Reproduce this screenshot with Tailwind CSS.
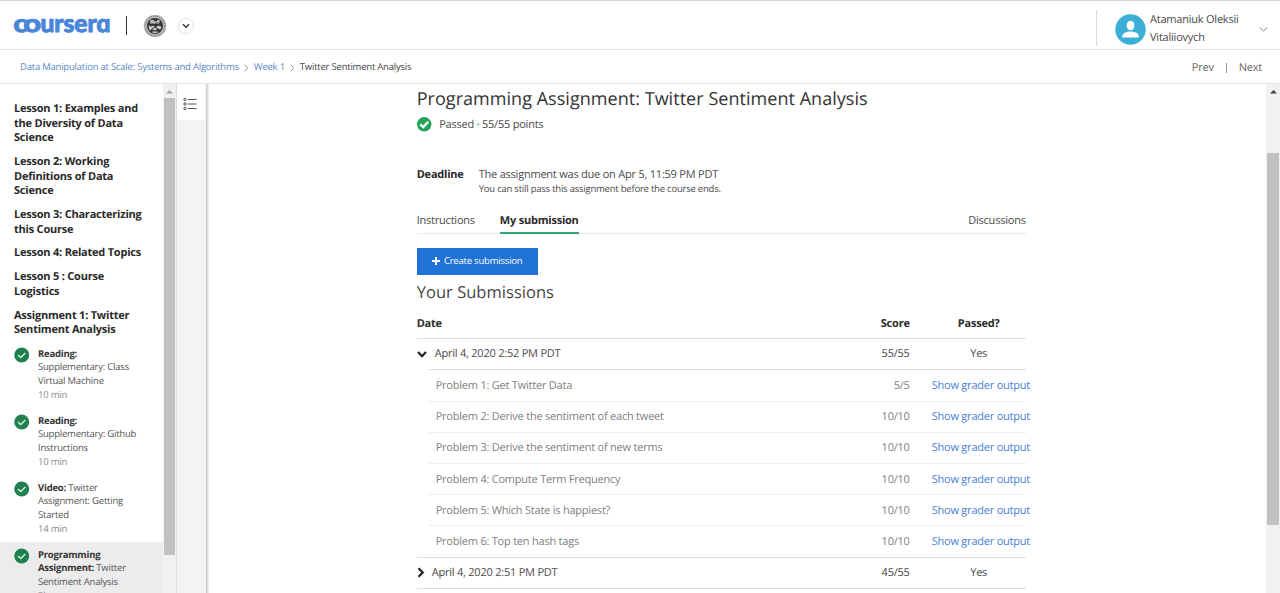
<!DOCTYPE html>
<html lang="en">
<head>
<meta charset="utf-8">
<title>Programming Assignment: Twitter Sentiment Analysis | Coursera</title>
<script src="https://cdn.jsdelivr.net/npm/@tailwindcss/browser@4"></script>
</head>
<body class="w-[1280px] h-[593px] overflow-hidden bg-white font-['Open_Sans',sans-serif] [text-rendering:geometricPrecision] text-[11px] tracking-[-0.22px] text-[#4a4a4a] flex flex-col">
<svg class="hidden">
  <symbol id="check" viewBox="0 0 16 16"><circle cx="7.700" cy="8" r="7.500" fill="#208050"/><path d="M4 8.1 6.800 10.6 11.300 6" fill="none" stroke="#cdf3dc" stroke-width="1.4"/></symbol>
</svg>
<header class="h-[50px] shrink-0 border-t border-b border-t-[#d5d5d5] border-b-[#e3e3e3] flex items-center">
  <svg class="ml-[13px] w-[98px] h-[36px] overflow-visible tracking-normal" viewBox="0 -3 98 36" role="img" aria-label="coursera"><g fill="#4a86d8" stroke="#4a86d8" stroke-width="1.200" font-family="Lato" font-weight="700" font-size="24.5"><text x="0.500" y="22" textLength="14" lengthAdjust="spacingAndGlyphs">c</text><text x="10.500" y="22" textLength="17.500" lengthAdjust="spacingAndGlyphs">o</text><text x="27.500" y="22" textLength="70" lengthAdjust="spacingAndGlyphs">urserɑ</text></g></svg>
  <div class="ml-[15px] w-px h-[19px] mt-px bg-[#333]"></div>
  <svg class="ml-4 w-[24px] h-[24px] mt-px" viewBox="0 0 24 24"><circle cx="12" cy="12" r="11.3" fill="#c0c0c0"/><circle cx="12" cy="12" r="9.800" fill="none" stroke="#808080" stroke-width="1.8" stroke-dasharray="1 1"/><circle cx="12" cy="12" r="8" fill="#333"/><path d="M7.500 6h3l1 1.500h2l1-1.500h2v3l-2 1H9l-2-1zM5.500 11.500l3 1 2-1 2 2 3-2 3 1-1 3-3-1-2 2-3-1-3 1zM9 17.500h6l-1 1.500h-4z" fill="#c8c8c8"/><path d="M9 8.500l2 2 4-2M8 16l4-3 4 3" stroke="#333" fill="none"/></svg>
  <div class="ml-[11px] mt-px size-[16px] rounded-full border border-[#e4e4e4] flex items-center justify-center"><svg class="w-[8px] h-[6px]" viewBox="0 0 8 6"><path d="M1 1.3 4 4.2 7 1.3" fill="none" stroke="#333" stroke-width="1.4"/></svg></div>
  <div class="ml-auto w-px h-[36px] mt-[6px] bg-[#d8d8d8]"></div>
  <svg class="ml-[18px] mt-[8px] w-[31px] h-[31px]" viewBox="0 0 31 31"><circle cx="15.500" cy="15.500" r="15.200" fill="#3bafd5"/><ellipse cx="15.500" cy="11.500" rx="3.900" ry="4.800" fill="#fff"/><path d="M7.300 23.500v-1.500c0-3 4.500-4.500 8.200-4.500s8.200 1.500 8.200 4.500v1.500z" fill="#fff"/></svg>
  <div class="ml-1 mt-[8px] w-[109px] leading-[18px]">Atamaniuk Oleksii<br>Vitaliiovych</div>
  <svg class="mt-[9px] mr-[12px] w-[9px] h-[7px]" viewBox="0 0 9 7"><path d="M.7 1.500 4.500 5 8.300 1.500" fill="none" stroke="#888"/></svg>
</header>
<nav class="h-[34px] pt-[2px] shrink-0 border-b border-[#e3e3e3] flex items-center pl-5 pr-[18px] text-[9.500px]">
  <span class="text-[#5a88c6]">Data Manipulation at Scale: Systems and Algorithms</span>
  <svg class="mx-[5px] mt-px w-[5px] h-[8px]" viewBox="0 0 5 8"><path d="M1 .7 3.500 4 1 7.300" fill="none" stroke="#999"/></svg>
  <span class="text-[#5a88c6]">Week 1</span>
  <svg class="mx-[5px] mt-px w-[5px] h-[8px]" viewBox="0 0 5 8"><path d="M1 .7 3.500 4 1 7.300" fill="none" stroke="#999"/></svg>
  <span class="text-[#444]">Twitter Sentiment Analysis</span>
  <span class="ml-auto mt-px flex items-center text-[11px] text-[#666]">Prev<i class="mx-[12px] w-px h-[10px] bg-[#999]"></i>Next</span>
</nav>
<div class="flex flex-1 min-h-0">
  <aside class="w-[163px] shrink-0 overflow-hidden pt-[17.800px]">
    <div class="pl-[14px] text-[11px] leading-[14.750px] font-bold text-[#2a2a2a] flex flex-col gap-[8.900px] whitespace-nowrap">
      <p>Lesson 1: Examples and<br>the Diversity of Data<br>Science</p>
      <p>Lesson 2: Working<br>Definitions of Data<br>Science</p>
      <p>Lesson 3: Characterizing<br>this Course</p>
      <p>Lesson 4: Related Topics</p>
      <p>Lesson 5 : Course<br>Logistics</p>
      <p>Assignment 1: Twitter<br>Sentiment Analysis</p>
    </div>
    <div class="mt-[2.900px] text-[9.500px] leading-[13.300px] text-[#555] whitespace-nowrap">
      <div class="h-[67px] pt-[6.200px] pl-[14px] flex gap-[8px]"><svg class="size-[16px]"><use href="#check"/></svg><div><b class="text-[#333]">Reading:</b><br>Supplementary: Class<br>Virtual Machine<p class="mt-[1.300px] text-[#888]">10 min</p></div></div>
      <div class="h-[67px] pt-[6.200px] pl-[14px] flex gap-[8px]"><svg class="size-[16px]"><use href="#check"/></svg><div><b class="text-[#333]">Reading:</b><br>Supplementary: Github<br>Instructions<p class="mt-[1.300px] text-[#888]">10 min</p></div></div>
      <div class="h-[67px] pt-[6.200px] pl-[14px] flex gap-[8px]"><svg class="size-[16px]"><use href="#check"/></svg><div><b class="text-[#333]">Video:</b> Twitter<br>Assignment: Getting<br>Started<p class="mt-[1.300px] text-[#888]">14 min</p></div></div>
      <div class="h-[67px] pt-[6.200px] pl-[14px] flex gap-[8px] bg-[#ececec]"><svg class="size-[16px]"><use href="#check"/></svg><div><b class="text-[#333]">Programming<br>Assignment:</b> Twitter<br>Sentiment Analysis<p class="mt-[1.300px] text-[#888]">3h</p></div></div>
    </div>
  </aside>
  <div class="w-[13px] shrink-0 bg-[#f1f1f1] flex flex-col items-center">
    <svg class="w-[7px] h-[14px] shrink-0" viewBox="0 0 7 14"><path d="M0 9.500 3.500 6 7 9.500z" fill="#a3a3a3"/></svg>
    <div class="w-[11px] h-[457px] bg-[#c1c1c1]"></div>
  </div>
  <div class="w-[30px] shrink-0 bg-[#f3f3f3] border-l border-[#ddd]">
    <div class="h-[36px] bg-white flex items-center justify-center mr-px"><svg class="w-[14px] h-[14px] mt-[4px] mr-[2px]" viewBox="0 0 14 14" fill="none" stroke="#444" stroke-width=".9"><circle cx="2" cy="2.500" r="1.200"/><circle cx="2" cy="7" r="1.200"/><circle cx="2" cy="11.500" r="1.200"/><path d="M5 2.500h8.500M5 7h8.500M5 11.500h8.500"/></svg></div>
  </div>
  <div class="w-[3px] shrink-0 bg-linear-to-r from-[#c6c6c6] to-[#f4f4f4]"></div>
  <main class="flex-1 min-w-0 overflow-hidden pl-[207.700px]">
    <div class="w-[609px] whitespace-nowrap">
      <h1 class="pt-[4px] h-[29px] text-[18px] leading-[23px] tracking-[0.04px] text-[#333]">Programming Assignment: Twitter Sentiment Analysis</h1>
      <div class="h-[22px] flex items-center gap-[7.500px]"><svg class="size-[15px]" viewBox="0 0 15 15"><circle cx="7.200" cy="7.300" r="7.200" fill="#25a35a"/><path d="M3.200 7.400 6.200 10.100 11.200 4.800" fill="none" stroke="#fff" stroke-width="2.300"/></svg><span class="pt-[2px]">Passed · 55/55 points</span></div>
      <div class="mt-[32px] flex leading-[15px]"><b class="w-[62px] text-[#2a2a2a]">Deadline</b><div>The assignment was due on Apr 5, 11:59 PM PDT<p class="text-[9.500px] leading-[14px]">You can still pass this assignment before the course ends.</p></div></div>
      <div class="mt-[11px] h-[27px] border-b border-[#eaeaea] flex leading-[28px]"><span>Instructions</span><b class="ml-[25px] h-[27px] border-b-2 border-[#2fa870] text-[#2a2a2a]">My submission</b><span class="ml-auto">Discussions</span></div>
      <button class="mt-[14px] w-[121px] h-[27px] bg-[#2172d7] text-white text-[9.600px] tracking-[-0.25px] flex items-center justify-center gap-1"><svg class="size-[8px] mb-px" viewBox="0 0 8 8"><path d="M4 0v8M0 4h8" stroke="#fff" stroke-width="2"/></svg>Create submission</button>
      <h2 class="h-[33px] pt-[5px] text-[16.500px] leading-[24px] tracking-[0.03px] text-[#444]">Your Submissions</h2>
      <div class="h-[31px] pt-[2px] border-b border-[#ddd] grid grid-cols-[1fr_60px_116px] items-center font-bold text-[#2a2a2a]"><span>Date</span><span class="text-right">Score</span><span class="text-center pl-[22px]">Passed?</span></div>
      <div class="h-[30.400px] pt-px grid grid-cols-[18px_1fr_60px_116px] items-center"><svg class="w-[11px] h-[8px]" viewBox="0 0 11 8"><path d="M1 1 5 5.200 9 1" fill="none" stroke="#222" stroke-width="2.200"/></svg><span>April 4, 2020 2:52 PM PDT</span><span class="text-right">55/55</span><span class="text-center pl-[22px]">Yes</span></div>
      <div class="ml-[12px] text-[#808080] [&>div]:h-[31.200px] [&>div]:pt-[1.500px] [&>div]:border-t [&>div]:border-[#ededed] [&>div]:pl-[7px] [&>div]:grid [&>div]:grid-cols-[1fr_60px_116px] [&>div]:items-center [&_i]:not-italic [&_i]:text-right [&_a]:pl-[22px] [&_a]:text-[#4a7fd6]">
        <div class="border-[#ddd]!"><span>Problem 1: Get Twitter Data</span><i>5/5</i><a>Show grader output</a></div>
        <div><span>Problem 2: Derive the sentiment of each tweet</span><i>10/10</i><a>Show grader output</a></div>
        <div><span>Problem 3: Derive the sentiment of new terms</span><i>10/10</i><a>Show grader output</a></div>
        <div><span>Problem 4: Compute Term Frequency</span><i>10/10</i><a>Show grader output</a></div>
        <div><span>Problem 5: Which State is happiest?</span><i>10/10</i><a>Show grader output</a></div>
        <div><span>Problem 6: Top ten hash tags</span><i>10/10</i><a>Show grader output</a></div>
      </div>
      <div class="h-[32px] pt-px border-y border-[#ddd] grid grid-cols-[15px_1fr_60px_116px] items-center"><svg class="w-[8px] h-[11px] mb-[2px]" viewBox="0 0 8 11"><path d="M1.500 1.200 5.700 5.500 1.500 9.800" fill="none" stroke="#222" stroke-width="2.200"/></svg><span>April 4, 2020 2:51 PM PDT</span><span class="text-right">45/55</span><span class="text-center pl-[22px]">Yes</span></div>
    </div>
  </main>
  <div class="w-[14px] shrink-0 bg-[#f1f1f1] flex flex-col items-center"><svg class="w-[7px] h-[14px] mb-[55px]" viewBox="0 0 7 14"><path d="M0 9.500 3.500 6 7 9.500z" fill="#444"/></svg><div class="w-[12px] h-[372px] bg-[#c1c1c1]"></div></div>
</div>
</body>
</html>
